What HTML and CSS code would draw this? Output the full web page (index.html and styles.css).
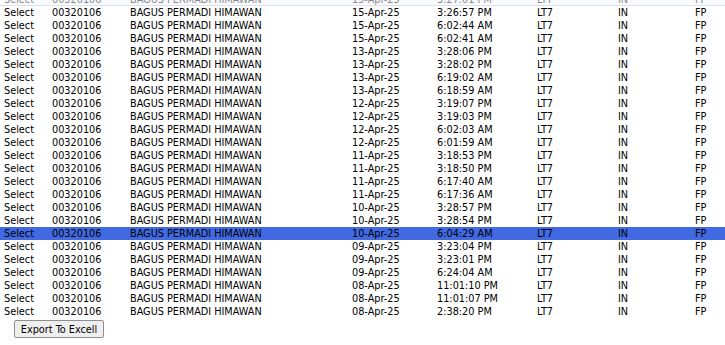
FILE: index.html
```html
<!DOCTYPE html>
<html>
<head>
<meta charset="utf-8">
<link rel="stylesheet" href="styles.css">
</head>
<body>
<div class="topfade"></div>
<table class="grid">
<colgroup>
<col class="c1"><col class="c2"><col class="c3"><col class="c4"><col class="c5"><col class="c6"><col class="c7"><col class="c8">
</colgroup>
<tbody>
<tr><td>Select</td><td>00320106</td><td>BAGUS PERMADI HIMAWAN</td><td>15-Apr-25</td><td>3:27:01 PM</td><td>LT7</td><td>IN</td><td>FP</td></tr>
<tr><td>Select</td><td>00320106</td><td>BAGUS PERMADI HIMAWAN</td><td>15-Apr-25</td><td>3:26:57 PM</td><td>LT7</td><td>IN</td><td>FP</td></tr>
<tr><td>Select</td><td>00320106</td><td>BAGUS PERMADI HIMAWAN</td><td>15-Apr-25</td><td>6:02:44 AM</td><td>LT7</td><td>IN</td><td>FP</td></tr>
<tr><td>Select</td><td>00320106</td><td>BAGUS PERMADI HIMAWAN</td><td>15-Apr-25</td><td>6:02:41 AM</td><td>LT7</td><td>IN</td><td>FP</td></tr>
<tr><td>Select</td><td>00320106</td><td>BAGUS PERMADI HIMAWAN</td><td>13-Apr-25</td><td>3:28:06 PM</td><td>LT7</td><td>IN</td><td>FP</td></tr>
<tr><td>Select</td><td>00320106</td><td>BAGUS PERMADI HIMAWAN</td><td>13-Apr-25</td><td>3:28:02 PM</td><td>LT7</td><td>IN</td><td>FP</td></tr>
<tr><td>Select</td><td>00320106</td><td>BAGUS PERMADI HIMAWAN</td><td>13-Apr-25</td><td>6:19:02 AM</td><td>LT7</td><td>IN</td><td>FP</td></tr>
<tr><td>Select</td><td>00320106</td><td>BAGUS PERMADI HIMAWAN</td><td>13-Apr-25</td><td>6:18:59 AM</td><td>LT7</td><td>IN</td><td>FP</td></tr>
<tr><td>Select</td><td>00320106</td><td>BAGUS PERMADI HIMAWAN</td><td>12-Apr-25</td><td>3:19:07 PM</td><td>LT7</td><td>IN</td><td>FP</td></tr>
<tr><td>Select</td><td>00320106</td><td>BAGUS PERMADI HIMAWAN</td><td>12-Apr-25</td><td>3:19:03 PM</td><td>LT7</td><td>IN</td><td>FP</td></tr>
<tr><td>Select</td><td>00320106</td><td>BAGUS PERMADI HIMAWAN</td><td>12-Apr-25</td><td>6:02:03 AM</td><td>LT7</td><td>IN</td><td>FP</td></tr>
<tr><td>Select</td><td>00320106</td><td>BAGUS PERMADI HIMAWAN</td><td>12-Apr-25</td><td>6:01:59 AM</td><td>LT7</td><td>IN</td><td>FP</td></tr>
<tr><td>Select</td><td>00320106</td><td>BAGUS PERMADI HIMAWAN</td><td>11-Apr-25</td><td>3:18:53 PM</td><td>LT7</td><td>IN</td><td>FP</td></tr>
<tr><td>Select</td><td>00320106</td><td>BAGUS PERMADI HIMAWAN</td><td>11-Apr-25</td><td>3:18:50 PM</td><td>LT7</td><td>IN</td><td>FP</td></tr>
<tr><td>Select</td><td>00320106</td><td>BAGUS PERMADI HIMAWAN</td><td>11-Apr-25</td><td>6:17:40 AM</td><td>LT7</td><td>IN</td><td>FP</td></tr>
<tr><td>Select</td><td>00320106</td><td>BAGUS PERMADI HIMAWAN</td><td>11-Apr-25</td><td>6:17:36 AM</td><td>LT7</td><td>IN</td><td>FP</td></tr>
<tr><td>Select</td><td>00320106</td><td>BAGUS PERMADI HIMAWAN</td><td>10-Apr-25</td><td>3:28:57 PM</td><td>LT7</td><td>IN</td><td>FP</td></tr>
<tr><td>Select</td><td>00320106</td><td>BAGUS PERMADI HIMAWAN</td><td>10-Apr-25</td><td>3:28:54 PM</td><td>LT7</td><td>IN</td><td>FP</td></tr>
<tr class="selected"><td>Select</td><td>00320106</td><td>BAGUS PERMADI HIMAWAN</td><td>10-Apr-25</td><td>6:04:29 AM</td><td>LT7</td><td>IN</td><td>FP</td></tr>
<tr><td>Select</td><td>00320106</td><td>BAGUS PERMADI HIMAWAN</td><td>09-Apr-25</td><td>3:23:04 PM</td><td>LT7</td><td>IN</td><td>FP</td></tr>
<tr><td>Select</td><td>00320106</td><td>BAGUS PERMADI HIMAWAN</td><td>09-Apr-25</td><td>3:23:01 PM</td><td>LT7</td><td>IN</td><td>FP</td></tr>
<tr><td>Select</td><td>00320106</td><td>BAGUS PERMADI HIMAWAN</td><td>09-Apr-25</td><td>6:24:04 AM</td><td>LT7</td><td>IN</td><td>FP</td></tr>
<tr><td>Select</td><td>00320106</td><td>BAGUS PERMADI HIMAWAN</td><td>08-Apr-25</td><td>11:01:10 PM</td><td>LT7</td><td>IN</td><td>FP</td></tr>
<tr><td>Select</td><td>00320106</td><td>BAGUS PERMADI HIMAWAN</td><td>08-Apr-25</td><td>11:01:07 PM</td><td>LT7</td><td>IN</td><td>FP</td></tr>
<tr><td>Select</td><td>00320106</td><td>BAGUS PERMADI HIMAWAN</td><td>08-Apr-25</td><td>2:38:20 PM</td><td>LT7</td><td>IN</td><td>FP</td></tr>
</tbody>
</table>
<div class="actions"><button class="export">Export To Excell</button></div>
</body>
</html>
```
FILE: styles.css
```css
html, body {
  margin: 0;
  padding: 0;
  background: #fff;
  overflow: hidden;
}
body {
  font-family: "DejaVu Sans Condensed", "DejaVu Sans", sans-serif;
  font-size: 10.8px;
  color: #000;
}
.topfade {
  position: absolute;
  top: 0;
  left: 0;
  right: 0;
  height: 5px;
  background: rgba(244, 246, 251, 0.55);
  border-bottom: 1px solid #dde2ee;
}
.grid {
  width: 100%;
  border-collapse: collapse;
  table-layout: fixed;
  margin-top: -7px;
}
.c1 { width: 48px; }
.c2 { width: 78px; }
.c3 { width: 222px; }
.c4 { width: 85px; }
.c5 { width: 100px; }
.c6 { width: 81px; }
.c7 { width: 77px; }
.grid td {
  height: 13px;
  line-height: 13px;
  padding: 0 0 0 4px;
  white-space: nowrap;
  overflow: hidden;
}
.grid tr.selected td {
  background: #4169e1;
}
.actions {
  padding: 2px 0 0 14px;
}
.export {
  font-family: "DejaVu Sans Condensed", "DejaVu Sans", sans-serif;
  font-size: 10.8px;
  color: #000;
  background: #efefef;
  border: 1px solid #8f8f8f;
  border-radius: 2px;
  height: 18px;
  width: 90px;
  padding: 0;
}
```
